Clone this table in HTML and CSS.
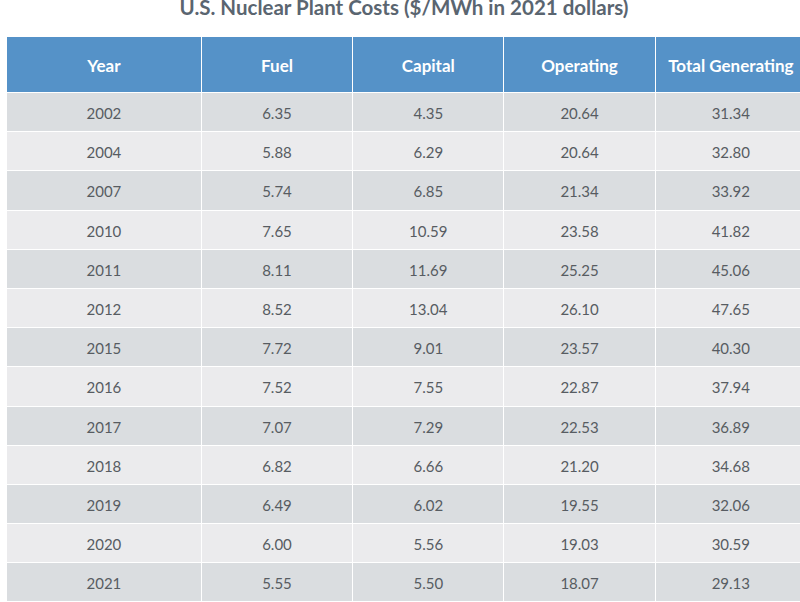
FILE: index.html
```html
<!DOCTYPE html>
<html>
<head>
<meta charset="utf-8">
<link rel="stylesheet" href="styles.css">
</head>
<body>
<div class="page">
  <h1 class="title">U.S. Nuclear Plant Costs ($/MWh in 2021 dollars)</h1>
  <table class="costs">
    <colgroup>
      <col class="c-year"><col class="c-num"><col class="c-num"><col class="c-num"><col class="c-num">
    </colgroup>
    <thead>
      <tr><th>Year</th><th>Fuel</th><th>Capital</th><th>Operating</th><th>Total Generating</th></tr>
    </thead>
    <tbody>
      <tr><td>2002</td><td>6.35</td><td>4.35</td><td>20.64</td><td>31.34</td></tr>
      <tr><td>2004</td><td>5.88</td><td>6.29</td><td>20.64</td><td>32.80</td></tr>
      <tr><td>2007</td><td>5.74</td><td>6.85</td><td>21.34</td><td>33.92</td></tr>
      <tr><td>2010</td><td>7.65</td><td>10.59</td><td>23.58</td><td>41.82</td></tr>
      <tr><td>2011</td><td>8.11</td><td>11.69</td><td>25.25</td><td>45.06</td></tr>
      <tr><td>2012</td><td>8.52</td><td>13.04</td><td>26.10</td><td>47.65</td></tr>
      <tr><td>2015</td><td>7.72</td><td>9.01</td><td>23.57</td><td>40.30</td></tr>
      <tr><td>2016</td><td>7.52</td><td>7.55</td><td>22.87</td><td>37.94</td></tr>
      <tr><td>2017</td><td>7.07</td><td>7.29</td><td>22.53</td><td>36.89</td></tr>
      <tr><td>2018</td><td>6.82</td><td>6.66</td><td>21.20</td><td>34.68</td></tr>
      <tr><td>2019</td><td>6.49</td><td>6.02</td><td>19.55</td><td>32.06</td></tr>
      <tr><td>2020</td><td>6.00</td><td>5.56</td><td>19.03</td><td>30.59</td></tr>
      <tr><td>2021</td><td>5.55</td><td>5.50</td><td>18.07</td><td>29.13</td></tr>
    </tbody>
  </table>
</div>
</body>
</html>
```
FILE: styles.css
```css
html, body {
  margin: 0;
  padding: 0;
  background: #ffffff;
  overflow: hidden;
}
.page {
  width: 820px;
  padding-left: 7px;
  font-family: Lato, "Liberation Sans", sans-serif;
}
.title {
  margin: -6px 0 6px -7px;
  width: 800px;
  height: 37px;
  line-height: 26px;
  text-align: center;
  font-size: 20.5px;
  font-weight: 700;
  color: #5a6570;
  padding-left: 8px;
  box-sizing: border-box;
}
.costs {
  border-collapse: collapse;
  table-layout: fixed;
  width: 800px;
}
.c-year { width: 194px; }
.c-num { width: 151px; }
.costs th {
  background: #5592c8;
  color: #ffffff;
  font-size: 17px;
  font-weight: 700;
  height: 53px;
  padding: 2px 0 0 0;
  border: 1px solid #ffffff;
  border-top: 0;
}
.costs td {
  height: 36.2px;
  padding: 2px 0 0 0;
  text-align: center;
  font-size: 15px;
  color: #575c62;
  border: 1px solid #ffffff;
}
.costs th:first-child, .costs td:first-child { border-left: 0; }
.costs tbody tr:nth-child(odd) td { background: #dadde0; }
.costs tbody tr:nth-child(even) td { background: #ebebed; }
```
